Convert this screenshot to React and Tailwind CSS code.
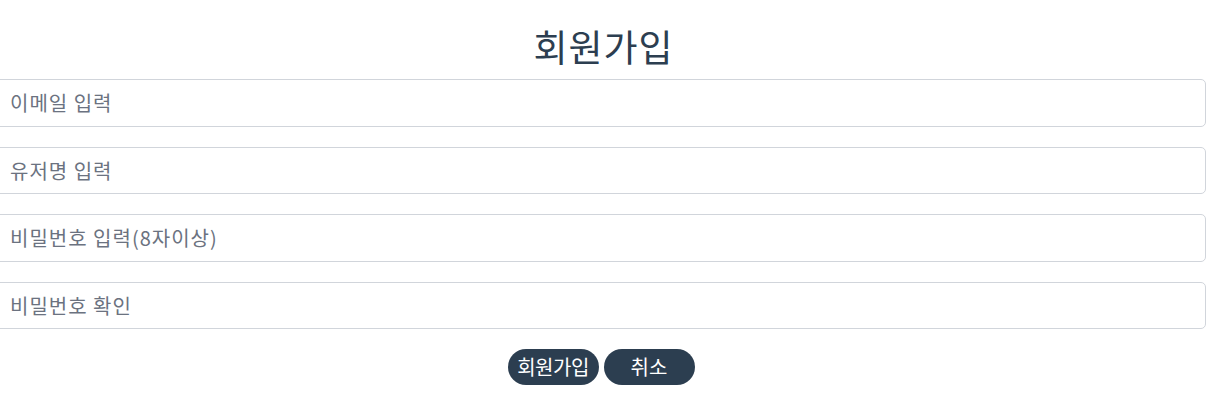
export default function App() {
  const fields = ['이메일 입력', '유저명 입력', '비밀번호 입력(8자이상)', '비밀번호 확인'];

  return (
    <div className="min-h-screen bg-white font-['Noto_Sans_CJK_KR','Noto_Sans',sans-serif] overflow-hidden">
      <h1 className="pt-[20px] text-center text-[37px] leading-[52px] tracking-[1px] text-[#2c3e50]">회원가입</h1>
      <form className="mt-[7px] flex flex-col gap-[20px]">
        {fields.map((f) => (
          <input
            key={f}
            type="text"
            placeholder={f}
            className="-ml-[10px] w-[calc(100%+9px)] h-[47.5px] rounded-[5px] border border-[#d1d5db] pl-[19px] text-[20px] tracking-[1px] text-[#6b7280] placeholder:text-[#6b7280] outline-none"
          />
        ))}
      </form>
      <div className="mt-[20px] flex justify-center gap-[5px] pr-[5px]">
        <button className="h-[36px] w-[91px] rounded-full bg-[#2c3e50] text-[20px] leading-none tracking-[-0.5px] text-white">
          회원가입
        </button>
        <button className="h-[36px] w-[91px] rounded-full bg-[#2c3e50] text-[20px] leading-none text-white">
          취소
        </button>
      </div>
    </div>
  );
}
